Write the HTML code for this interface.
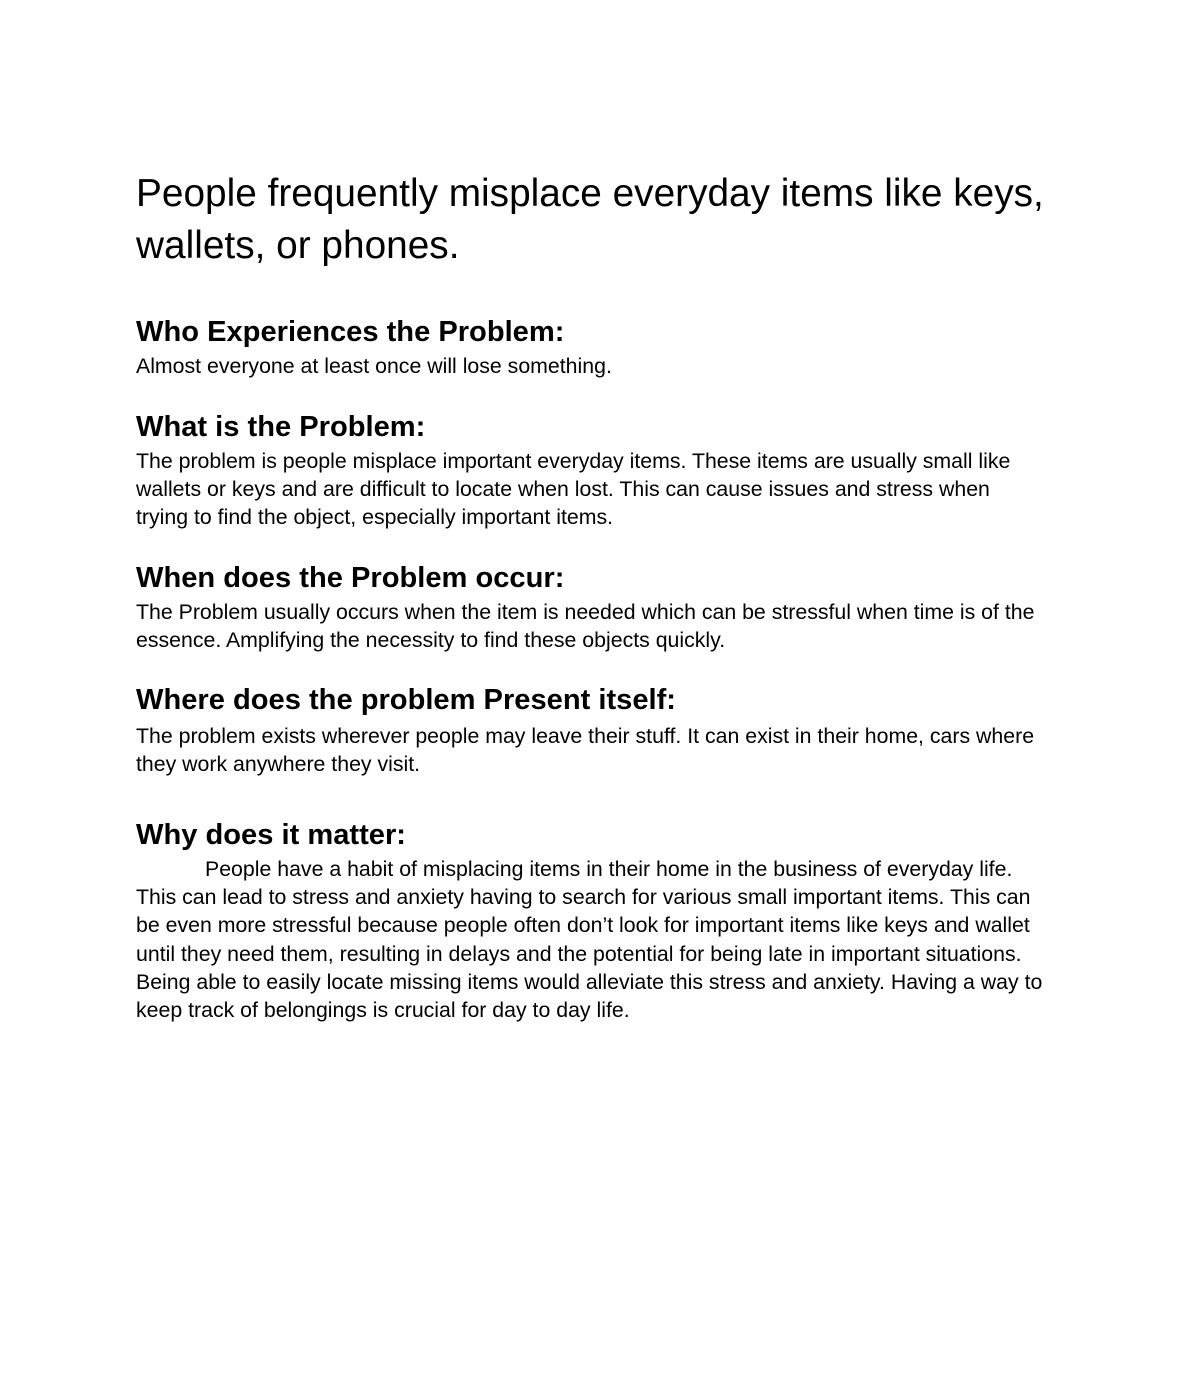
<!DOCTYPE html>
<html><head><meta charset="utf-8"><style>
body{margin:0;width:1182px;height:1396px;background:#fff;position:relative;font-family:"Liberation Sans",Arial,sans-serif;color:#000;}
.a{position:absolute;left:136px;width:1000px;white-space:nowrap;}
.t{font-size:38.8px;line-height:52px;}
.h{font-size:29.1px;font-weight:bold;line-height:32px;}
.p{font-size:21.3px;line-height:28.2px;}
</style></head><body>
<div class="a t" style="top:168px">People frequently misplace everyday items like keys,<br>wallets, or phones.</div>
<div class="a h" style="top:316px">Who Experiences the Problem:</div>
<div class="a p" style="top:352px">Almost everyone at least once will lose something.</div>
<div class="a h" style="top:411px">What is the Problem:</div>
<div class="a p" style="top:447px">The problem is people misplace important everyday items. These items are usually small like<br>wallets or keys and are difficult to locate when lost. This can cause issues and stress when<br>trying to find the object, especially important items.</div>
<div class="a h" style="top:562px">When does the Problem occur:</div>
<div class="a p" style="top:598px">The Problem usually occurs when the item is needed which can be stressful when time is of the<br>essence. Amplifying the necessity to find these objects quickly.</div>
<div class="a h" style="top:684px">Where does the problem Present itself:</div>
<div class="a p" style="top:722px">The problem exists wherever people may leave their stuff. It can exist in their home, cars where<br>they work anywhere they visit.</div>
<div class="a h" style="top:819px">Why does it matter:</div>
<div class="a p" style="top:855px"><span style="display:inline-block;width:69px"></span>People have a habit of misplacing items in their home in the business of everyday life.<br>This can lead to stress and anxiety having to search for various small important items. This can<br>be even more stressful because people often don’t look for important items like keys and wallet<br>until they need them, resulting in delays and the potential for being late in important situations.<br>Being able to easily locate missing items would alleviate this stress and anxiety. Having a way to<br>keep track of belongings is crucial for day to day life.</div>
</body></html>
